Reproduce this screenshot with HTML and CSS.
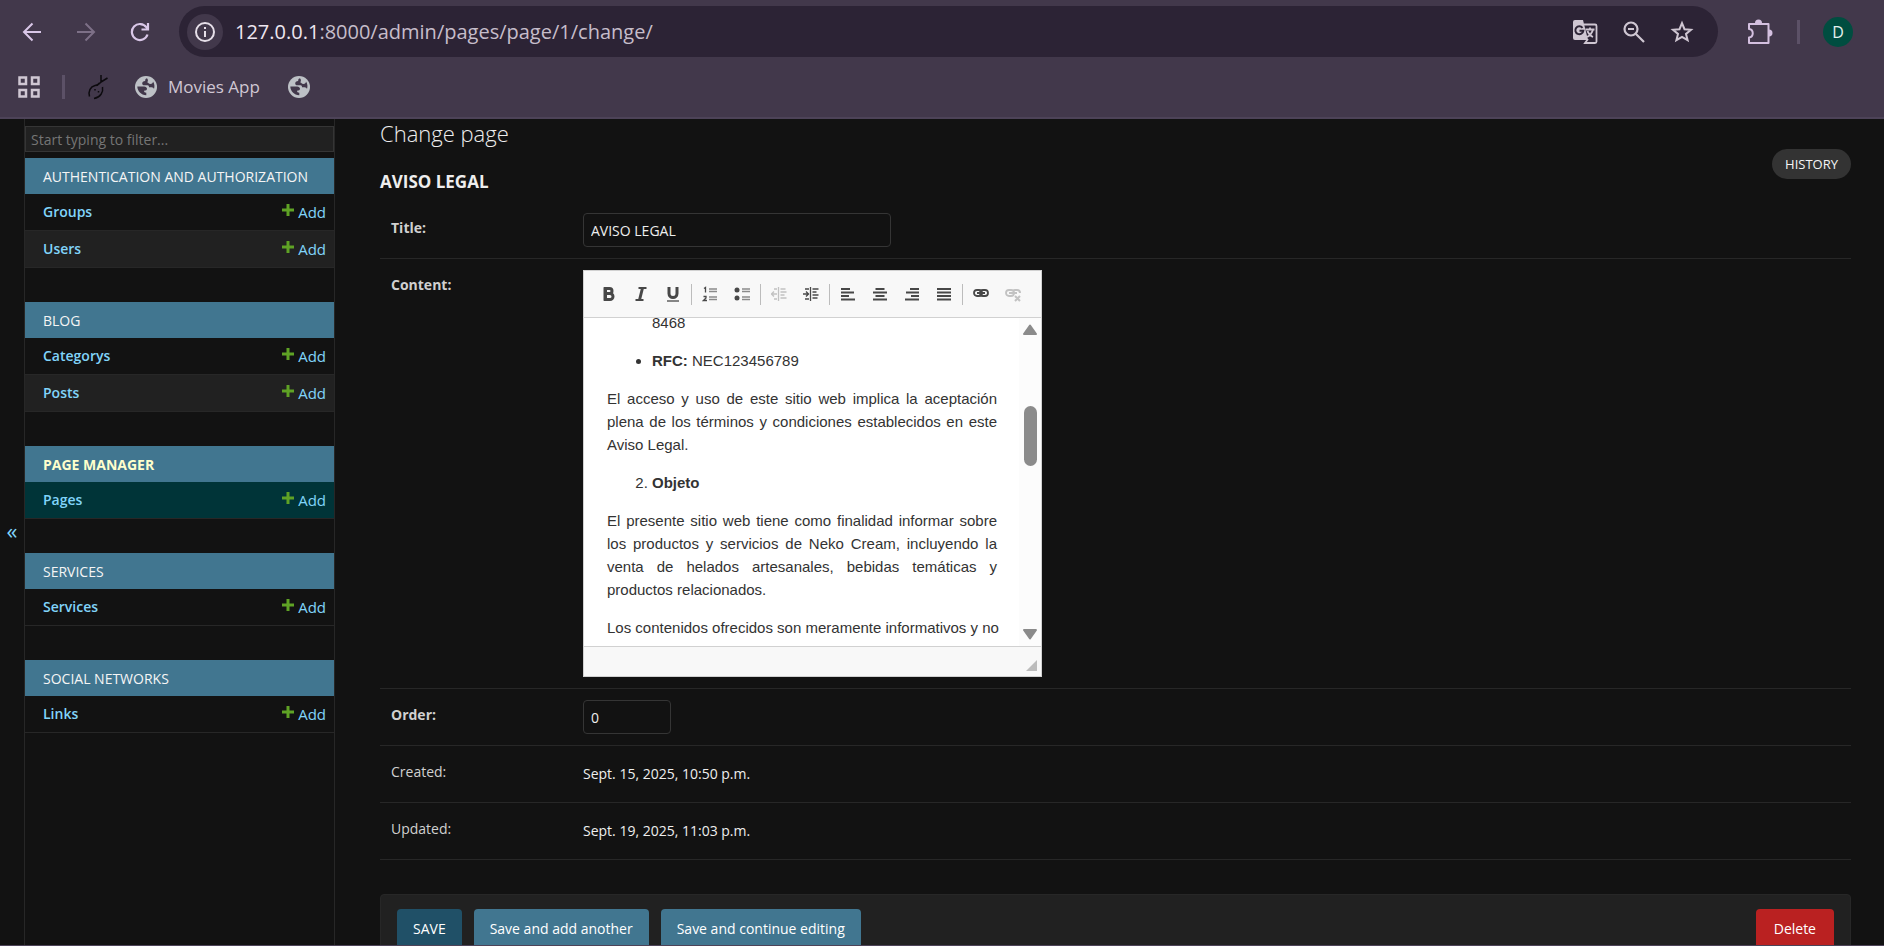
FILE: index.html
```html
<!DOCTYPE html>
<html lang="en">
<head>
<meta charset="utf-8">
<title>Change page</title>
<link rel="stylesheet" href="styles.css">
</head>
<body>
<svg class="defs" width="0" height="0" aria-hidden="true">
  <symbol id="plus" viewBox="0 0 12 12"><path fill="#5fa225" d="M4.500 0h3v4.500H12v3H7.500V12h-3V7.500H0v-3h4.500z"/></symbol>
  <symbol id="globe" viewBox="0 0 22 22"><circle cx="11" cy="11" r="11" fill="#bdc1c6"/><path fill="#42384b" d="M12 2.300c-2 .5-1.800 1.700-1.800 2.700-2 .2-3 1-3 2.500 0 1 .8 1.800 2 1.800h3.300c1.200 0 1.500.8 1.500 2h2.500c1.500 0 2 .8 2.500 1.800.8-3 .6-5-1-7.600 0 1.500-1 2.500-2.500 2.500-2 0-2-1.500-3.500-1.700 1-.5 1.500-2.500 0-4zM2.300 10.500c.2 4.500 3.700 8.500 9 8.800v-2.500c-1.500 0-2.300-.8-2.300-2 2 0 3-.8 3-2s-1.200-2.300-2.800-2.300z"/></symbol>
</svg>
<header class="browser">
  <div class="toolbar">
    <button class="tool" aria-label="Back"><svg width="20" height="20" viewBox="0 0 20 20" fill="none" stroke="#d9c7e8" stroke-width="2"><path d="M19 10H2.500M10.500 1.500 2 10l8.500 8.500"/></svg></button>
    <button class="tool" aria-label="Forward"><svg width="20" height="20" viewBox="0 0 20 20" fill="none" stroke="#7d7087" stroke-width="2"><path d="M1 10h16.500M9.500 1.500 18 10l-8.500 8.500"/></svg></button>
    <button class="tool" aria-label="Reload"><svg width="20" height="20" viewBox="0 0 20 20" fill="none" stroke="#d9c7e8" stroke-width="2.200"><path d="M17.500 12.500a8 8 0 1 1-1-7L17.500 7M18 1v6.500h-6.500"/></svg></button>
    <div class="address">
      <button class="info" aria-label="Site information"><svg width="22" height="22" viewBox="0 0 22 22" fill="none" stroke="#e6dfe9" stroke-width="2"><circle cx="11" cy="11" r="9"/><path d="M11 10v6M11 6v2"/></svg></button>
      <span class="url"><b>127.0.0.1</b>:8000/admin/pages/page/1/change/</span>
      <button class="tool" aria-label="Translate"><svg width="26" height="26" viewBox="0 0 26 26"><path fill="#cfc6d2" d="M3 1h8l5 20H3a2 2 0 0 1-2-2V3a2 2 0 0 1 2-2z"/><path fill="none" stroke="#cfc6d2" stroke-width="1.800" d="M12 5.500h11a1.500 1.500 0 0 1 1.500 1.500v15.500a1.500 1.500 0 0 1-1.500 1.500H13l3-4M13.500 10.500h9M18 8.500v2M21 10.500c-1 4-3 6-6 7.500M15.500 12c1 3 3 5 5.500 6"/><path fill="none" stroke="#2c2335" stroke-width="2" d="M10.500 8.800a4 4 0 1 0 .8 3H7.500"/></svg></button>
      <button class="tool" aria-label="Zoom out"><svg width="22" height="22" viewBox="0 0 22 22" fill="none" stroke="#cfc6d2" stroke-width="2.200"><circle cx="8" cy="8" r="6.500"/><path d="M12.700 12.700 21 21M5 8h6"/></svg></button>
      <button class="tool" aria-label="Bookmark"><svg width="24" height="24" viewBox="0 0 24 24" fill="none" stroke="#cfc6d2" stroke-width="2"><path d="m12 3.200 2.500 6 6.500.5-5 4.200 1.600 6.300L12 16.800l-5.600 3.400L8 13.900 3 9.700l6.500-.5z"/></svg></button>
    </div>
    <button class="tool puzzle" aria-label="Extensions"><svg width="26" height="26" viewBox="0 0 26 26"><path fill="none" stroke="#d4c0e0" stroke-width="2" stroke-linejoin="round" d="M2 5h19.500v19H2v-5.500c5-.5 5-8 0-8.500z"/><path fill="#d4c0e0" d="M8 4a3.500 3.500 0 0 1 7 0zM22 10.500a3.500 3.500 0 0 1 0 7z"/></svg></button>
    <span class="rule"></span>
    <button class="avatar">D</button>
  </div>
  <nav class="bookmarks">
    <button class="tool" aria-label="Apps"><svg width="22" height="22" viewBox="0 0 22 22" fill="none" stroke="#d0c7d3" stroke-width="2.500"><path d="M1.500 1.500h6.500v6.500H1.500zM14 1.500h6.500v6.500H14zM1.500 14h6.500v6.500H1.500zM14 14h6.500v6.500H14z"/></svg></button>
    <span class="rule"></span>
    <a href="#" class="mark" aria-label="Bookmark"><svg width="22" height="26" viewBox="0 0 22 26" fill="none" stroke="#0c0a0e" stroke-width="1.500"><path d="M2.500 22.500C1 17 3.500 12.500 8 11.500c2 0 3.500-.8 4.500-2.500M15.500 13c1 5-2 10.500-8.500 11.500M14 1v7l-2 2M20.500 4 14 8M8 15v1.500M11.500 17v1.500"/></svg></a>
    <a href="#" class="mark"><svg width="22" height="22"><use href="#globe"/></svg>Movies App</a>
    <a href="#" class="mark" aria-label="Website"><svg width="22" height="22"><use href="#globe"/></svg></a>
  </nav>
</header>
<div class="admin">
  <button class="toggle" aria-label="Toggle navigation">«</button>
  <nav class="sidebar">
    <input class="filter" type="search" placeholder="Start typing to filter..." aria-label="Filter navigation items">
    <table class="app"><caption><a href="#">Authentication and Authorization</a></caption>
      <tr><th><a href="#">Groups</a></th><td><a href="#"><svg><use href="#plus"/></svg>Add</a></td></tr>
      <tr><th><a href="#">Users</a></th><td><a href="#"><svg><use href="#plus"/></svg>Add</a></td></tr>
    </table>
    <table class="app"><caption><a href="#">Blog</a></caption>
      <tr><th><a href="#">Categorys</a></th><td><a href="#"><svg><use href="#plus"/></svg>Add</a></td></tr>
      <tr><th><a href="#">Posts</a></th><td><a href="#"><svg><use href="#plus"/></svg>Add</a></td></tr>
    </table>
    <table class="app current"><caption><a href="#">Page Manager</a></caption>
      <tr><th><a href="#">Pages</a></th><td><a href="#"><svg><use href="#plus"/></svg>Add</a></td></tr>
    </table>
    <table class="app"><caption><a href="#">Services</a></caption>
      <tr><th><a href="#">Services</a></th><td><a href="#"><svg><use href="#plus"/></svg>Add</a></td></tr>
    </table>
    <table class="app"><caption><a href="#">Social Networks</a></caption>
      <tr><th><a href="#">Links</a></th><td><a href="#"><svg><use href="#plus"/></svg>Add</a></td></tr>
    </table>
  </nav>
  <main class="content">
    <h1>Change page</h1>
    <div class="heading"><h2>AVISO LEGAL</h2><a class="history" href="#">HISTORY</a></div>
    <form>
      <div class="row"><label for="title">Title:</label><input id="title" class="field wide" value="AVISO LEGAL"></div>
      <div class="row"><span class="name strong" id="content-label">Content:</span>
        <div class="editor">
          <div class="tools">
            <button type="button" aria-label="Bold"><svg viewBox="0 0 16 16"><path class="s3" d="M4.500 2.500h4a2.500 2.500 0 0 1 0 5h-4zM4.500 7.500H9a3 3 0 0 1 0 6H4.500zM4 1.200v13.600"/></svg></button>
            <button type="button" aria-label="Italic"><svg viewBox="0 0 16 16"><path class="s2" d="M5.500 2h8M2.500 14h8"/><path class="s3" d="M9.500 2 6.500 14"/></svg></button>
            <button type="button" aria-label="Underline"><svg viewBox="0 0 16 16"><path class="s3" d="M4 1v6.500a4 4 0 0 0 8 0V1"/><path class="s1" d="M2 15h12"/></svg></button>
            <i></i>
            <button type="button" aria-label="Numbered list"><svg viewBox="0 0 16 16"><path class="s1" d="M2 2.500 3.500 1.500V6.500M1.500 10.500h2.500v1.500L1.500 14.500H5"/><path class="soft" d="M7 3h8M7 5.500h8M7 11h8M7 13.500h8"/></svg></button>
            <button type="button" aria-label="Bulleted list"><svg viewBox="0 0 16 16"><circle cx="3" cy="4" r="2.500"/><circle cx="3" cy="12" r="2.500"/><path class="soft" d="M8 3h8M8 5.500h8M8 11h8M8 13.500h8"/></svg></button>
            <i></i>
            <button type="button" disabled aria-label="Decrease indent"><svg viewBox="0 0 16 16"><path class="s1" d="M7.500 1v14M0 8h6M3 5.500.5 8 3 10.500M9.500 3h5M9.500 6h6M9.500 9h4M9.500 12h6M3 3h3M3 13h3"/></svg></button>
            <button type="button" aria-label="Increase indent"><svg viewBox="0 0 16 16"><path class="s1" d="M7.500 1v14M0 8h6M3 5.500 5.500 8 3 10.500M9.500 3h6M9.500 6h4M9.500 9h6M9.500 12h5M2 3h4M2 13h4"/></svg></button>
            <i></i>
            <button type="button" aria-label="Align left"><svg viewBox="0 0 16 16"><path class="s2" d="M1 3h9M1 6.500h13M1 10h8M1 13.500h14"/></svg></button>
            <button type="button" aria-label="Center"><svg viewBox="0 0 16 16"><path class="s2" d="M3.500 3h9M1 6.500h14M3.500 10h9M1 13.500h14"/></svg></button>
            <button type="button" aria-label="Align right"><svg viewBox="0 0 16 16"><path class="s2" d="M6 3h9M2 6.500h13M7 10h8M1 13.500h14"/></svg></button>
            <button type="button" aria-label="Justify"><svg viewBox="0 0 16 16"><path class="s2" d="M1 3h14M1 6.500h14M1 10h14M1 13.500h14"/></svg></button>
            <i></i>
            <button type="button" aria-label="Link"><svg viewBox="0 0 16 16"><rect x="1" y="4" width="8" height="6" rx="3"/><rect x="7" y="4" width="8" height="6" rx="3"/><path class="s2" d="M4 7h8"/></svg></button>
            <button type="button" disabled aria-label="Unlink"><svg viewBox="0 0 16 16"><rect x="1" y="4" width="8" height="6" rx="3"/><path class="s2" d="M4 7h8M8 5q1-1 2-1h2q3 0 3 3M10 10l5 5M15 10l-5 5"/></svg></button>
          </div>
          <div class="body">
            <div class="text" role="textbox" aria-multiline="true" aria-labelledby="content-label" contenteditable="true" spellcheck="false">
              <ul><li class="rest">8468</li><li><b>RFC:</b> NEC123456789</li></ul>
              <p>El acceso y uso de este sitio web implica la aceptación plena de los términos y condiciones establecidos en este Aviso Legal.</p>
              <ol start="2"><li><b>Objeto</b></li></ol>
              <p>El presente sitio web tiene como finalidad informar sobre los productos y servicios de Neko Cream, incluyendo la venta de helados artesanales, bebidas temáticas y productos relacionados.</p>
              <p class="line">Los contenidos ofrecidos son meramente informativos y no</p>
            </div>
            <div class="scroll"><svg width="16" height="12" viewBox="0 0 16 12"><path d="M8 1.500 14 10H2z"/></svg><span class="thumb"></span><svg width="16" height="12" viewBox="0 0 16 12"><path d="M8 10.500 14 2H2z"/></svg></div>
          </div>
          <div class="bottom"><svg width="11" height="11"><path fill="#bcbcbc" d="M11 0v11H0z"/></svg></div>
        </div>
      </div>
      <div class="row"><label for="order">Order:</label><input id="order" class="field small" value="0"></div>
      <div class="row read"><span class="name">Created:</span><span class="value">Sept. 15, 2025, 10:50 p.m.</span></div>
      <div class="row read"><span class="name">Updated:</span><span class="value">Sept. 19, 2025, 11:03 p.m.</span></div>
      <div class="submit">
        <button type="button" class="btn save">SAVE</button>
        <button type="button" class="btn">Save and add another</button>
        <button type="button" class="btn">Save and continue editing</button>
        <a href="#" class="btn delete">Delete</a>
      </div>
    </form>
  </main>
</div>
</body>
</html>
```

FILE: styles.css
```css
* { box-sizing: border-box; }
body { margin: 0; height: 100vh; overflow: hidden; display: flex; flex-direction: column; border-bottom: 1px solid #4d4358; background: #121212; color: #eee; font: 15px/20px "Open Sans", "Noto Sans", sans-serif; }
button, input { font: inherit; color: inherit; }
button { border: 0; padding: 0; background: none; }
a { color: #81d4fa; text-decoration: none; }
svg { display: block; flex: none; }
.defs { position: absolute; }

.browser { flex: none; background: #42384b; border-bottom: 2px solid #4d4358; color: #d0c7d3; height: 119px; }
.toolbar { display: flex; align-items: center; padding: 6px 31px 0 22px; gap: 34px; }
.toolbar .tool { flex: none; }
.address { flex: 1; display: flex; align-items: center; height: 51px; margin-left: -5px; padding: 0 24px 0 8px; gap: 25px; border-radius: 26px; background: #2c2335; }
.info { display: grid; place-items: center; width: 36px; height: 36px; border-radius: 50%; background: #42384b; }
.url { flex: 1; margin-left: -13px; font-size: 20px; line-height: 28px; color: #c6bdca; }
.url b { font-weight: 400; color: #eee6f0; }
.puzzle { margin-left: -5px; }
.rule { width: 3px; height: 24px; background: #5c5167; }
.toolbar .rule { margin: 0 -11px 0 -10px; }
.avatar { width: 30px; height: 30px; border-radius: 50%; background: #004d40; color: #e6f2ef; font-size: 16px; }
.bookmarks { display: flex; align-items: center; height: 60px; padding-left: 18px; gap: 26px; font-size: 17px; }
.bookmarks .rule { margin: 0 -4px; }
.mark { display: flex; align-items: center; gap: 11px; color: #d0c7d3; }
.mark + .mark + .mark { margin-left: 2px; }

.admin { flex: 1; display: flex; min-height: 0; }
.toggle { width: 24px; flex: none; color: #81d4fa; font-size: 22px; padding-bottom: 4px; }
.sidebar { width: 311px; flex: none; border: solid #272727; border-width: 0 1px; padding-top: 7px; }
.filter { display: block; width: 100%; height: 26px; margin-bottom: 6px; padding: 0 5px; border: 1px solid #353535; border-radius: 0; background: #212121; outline: 0; font-size: 14px; }
.filter::placeholder { color: #757575; }
.app { width: 100%; border-spacing: 0; margin-bottom: 34px; }
.app caption { height: 36px; padding: 9px 18px 7px; background: #417690; text-align: left; text-transform: uppercase; font-size: 14px; }
.app caption a { color: #f5f5f5; }
.app th, .app td { height: 37px; padding: 0 8px 0 18px; border-bottom: 1px solid #272727; text-align: left; font-weight: 600; }
.app th { font-size: 14px; }
.app td { width: 80px; font-weight: 400; padding-left: 0; }
.app td a { display: flex; justify-content: flex-end; gap: 4px; }
.app td svg { width: 12px; height: 12px; margin-top: 2px; }
.app tr:nth-child(even) { background: #212121; }
.current tr { background: #003438; }
.current caption a { color: #ffc; font-weight: 700; }

.content { flex: 1; padding: 0 33px 0 45px; }
h1 { margin: 0 0 22px; font-size: 22px; line-height: 28px; font-weight: 300; }
.heading { display: flex; justify-content: space-between; align-items: flex-start; height: 33px; }
h2 { margin: 3px 0 0; font-size: 17px; line-height: 20px; }
.history { margin-top: -20px; padding: 5px 13px; border-radius: 15px; background: #333; color: #f5f5f5; font-size: 13px; }
.row { display: flex; align-items: flex-start; padding: 11px; border-bottom: 1px solid #272727; }
label, .name { width: 192px; flex: none; padding-top: 5px; color: #d0d0d0; font-size: 14px; }
label, .strong { font-weight: 700; }
.value { padding-top: 7px; font-size: 14px; }
.read { height: 57px; }
.field { height: 34px; padding: 5px 7px; border: 1px solid #353535; border-radius: 4px; background: #121212; font-size: 14px; }
.wide { width: 308px; }
.small { width: 88px; }

.editor { width: 459px; border: 1px solid #d1d1d1; background: #fff; color: #333; }
.tools { display: flex; align-items: center; height: 47px; padding-left: 9px; background: #f8f8f8; border-bottom: 1px solid #d1d1d1; }
.tools button { width: 32px; height: 30px; display: grid; place-items: center; }
.tools svg { width: 16px; height: 16px; fill: #484848; }
.tools path, .tools rect { fill: none; stroke: #484848; }
.tools rect { stroke-width: 1.8; }
.tools i { width: 1px; height: 21px; margin: 0 2px; background: #bcbcbc; }
.tools button:disabled { opacity: 0.3; }
.s1 { stroke-width: 1.3; }
.s2 { stroke-width: 2; }
.s3 { stroke-width: 3; }
.tools .soft { stroke: #8a8a8a; stroke-width: 1.6; }
.body { display: flex; height: 328px; }
.text { flex: 1; min-width: 0; overflow: hidden; padding: 0 22px 0 23px; font: 15px/23px "Liberation Sans", Arial, sans-serif; text-align: justify; outline: 0; }
.text ul, .text ol { margin: 0 0 15px; padding-left: 45px; }
.text ul { margin-top: -7px; }
.text li + li { margin-top: 15px; }
.text .rest { list-style: none; }
.text p { margin: 0 0 15px; }
.text .line { white-space: nowrap; }
.scroll { width: 22px; flex: none; display: flex; flex-direction: column; align-items: center; justify-content: space-between; padding: 6px 0; background: #fcfcfc; }
.scroll svg { fill: #8b8b8b; stroke: #8b8b8b; stroke-width: 2; stroke-linejoin: round; }
.thumb { width: 13px; height: 60px; margin-bottom: 92px; border-radius: 7px; background: #8b8b8b; }
.bottom { height: 30px; display: flex; justify-content: flex-end; align-items: flex-end; padding: 5px 4px; background: #f8f8f8; border-top: 1px solid #d1d1d1; }

.submit { display: flex; gap: 12px; margin-top: 34px; padding: 14px 16px; border: 1px solid #272727; border-radius: 4px; background: #212121; }
.btn { height: 40px; padding: 10px 16px; border-radius: 4px; background: #417690; color: #fff; font-size: 14px; }
.save { background: #205067; }
.delete { margin-left: auto; padding: 10px 18px; background: #ba2121; }
```
